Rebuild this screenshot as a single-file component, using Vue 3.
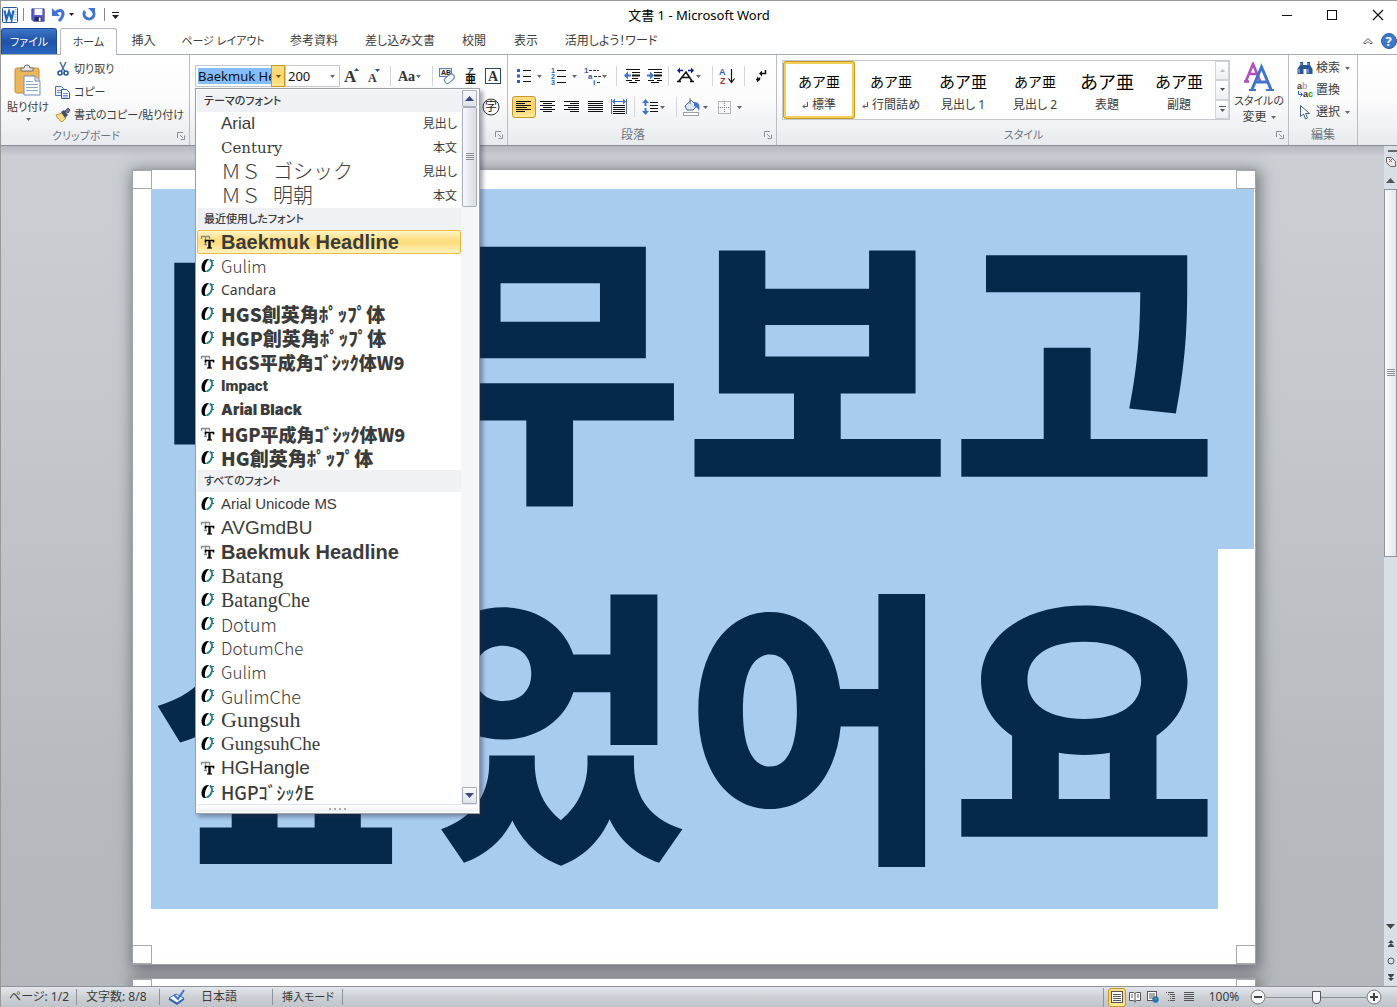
<script setup>
import { ref } from 'vue'

const fontName = ref('Baekmuk Headline')
const fontSize = ref('200')
const zoom = ref(50)

const tabs = [
  { name: '挿入', width: 53 },
  { name: 'ページ レイアウト', width: 106, kana: true },
  { name: '参考資料', width: 76 },
  { name: '差し込み文書', width: 96 },
  { name: '校閲', width: 52 },
  { name: '表示', width: 52 },
  { name: '活用しよう！ワード', width: 118 },
]

const styles = [
  { name: '標準', size: 's14', mark: true, active: true },
  { name: '行間詰め', size: 's14', mark: true },
  { name: '見出し 1', size: 's16' },
  { name: '見出し 2', size: 's14' },
  { name: '表題', size: 's18' },
  { name: '副題', size: 's16' },
]

const sections = [
  {
    title: 'テーマのフォント',
    fonts: [
      { name: 'Arial', face: 'sans17', note: '見出し' },
      { name: 'Century', face: 'century', note: '本文' },
      { name: 'ＭＳ ゴシック', face: 'wide', note: '見出し' },
      { name: 'ＭＳ 明朝', face: 'wide', note: '本文' },
    ],
  },
  {
    title: '最近使用したフォント',
    fonts: [
      { name: 'Baekmuk Headline', face: 'headline', kind: 'T', active: true },
      { name: 'Gulim', face: 'thin17', kind: 'O' },
      { name: 'Candara', face: 'candara', kind: 'O' },
      { name: 'HGS創英角ﾎﾟｯﾌﾟ体', face: 'pop', kind: 'O' },
      { name: 'HGP創英角ﾎﾟｯﾌﾟ体', face: 'pop', kind: 'O' },
      { name: 'HGS平成角ｺﾞｼｯｸ体W9', face: 'heavy', kind: 'T' },
      { name: 'Impact', face: 'impact', kind: 'O' },
      { name: 'Arial Black', face: 'black', kind: 'O' },
      { name: 'HGP平成角ｺﾞｼｯｸ体W9', face: 'heavy', kind: 'T' },
      { name: 'HG創英角ﾎﾟｯﾌﾟ体', face: 'pop', kind: 'O' },
    ],
  },
  {
    title: 'すべてのフォント',
    fonts: [
      { name: 'Arial Unicode MS', face: 'sans15', kind: 'O' },
      { name: 'AVGmdBU', face: 'sans19', kind: 'T' },
      { name: 'Baekmuk Headline', face: 'headline', kind: 'T' },
      { name: 'Batang', face: 'serif22', kind: 'O' },
      { name: 'BatangChe', face: 'serif20', kind: 'O' },
      { name: 'Dotum', face: 'thin18', kind: 'O' },
      { name: 'DotumChe', face: 'thin17', kind: 'O' },
      { name: 'Gulim', face: 'thin17', kind: 'O' },
      { name: 'GulimChe', face: 'thin18', kind: 'O' },
      { name: 'Gungsuh', face: 'serif22', kind: 'O' },
      { name: 'GungsuhChe', face: 'serif19', kind: 'O' },
      { name: 'HGHangle', face: 'sans19', kind: 'T' },
      { name: 'HGPｺﾞｼｯｸE', face: 'gothic', kind: 'O' },
    ],
  },
]

const aligns = [
  { name: '左揃え', d: 'M4 5.5h15M4 7.5h9M4 9.5h15M4 11.5h11M4 13.5h15M4 15.5h9', active: true },
  { name: '中央揃え', d: 'M4 5.5h15M7 7.5h9M4 9.5h15M7 11.5h9M4 13.5h15M7 15.5h9' },
  { name: '右揃え', d: 'M4 5.5h15M10 7.5h9M4 9.5h15M8 11.5h11M4 13.5h15M10 15.5h9' },
  { name: '両端揃え', d: 'M4 5.5h15M4 7.5h15M4 9.5h15M4 11.5h15M4 13.5h15M4 15.5h15' },
]
</script>

<template>
  <div class="window">
    <header class="titlebar">
      <div class="quick">
        <svg class="logo" width="18" height="18" viewBox="0 0 18 18">
          <rect x="1.500" y="1.500" width="15" height="15" rx="1" fill="#f4f8fd" stroke="#2b579a" />
          <path d="M13.500 3.500h2M13.500 6h2M13.500 8.500h2M13.500 11h2M13.500 13.500h2" stroke="#8eb0dd" />
          <path d="M3.500 4.500l2 9 2.500-8 2.500 8 2-9" fill="none" stroke="#1f66b8" stroke-width="2.200" />
        </svg>
        <i class="bar"></i>
        <button class="q" aria-label="上書き保存">
          <svg width="14" height="14" viewBox="0 0 16 16">
            <path d="M1 1h14v14H3l-2-2z" fill="#5c60d2" stroke="#2d318f" />
            <rect x="4" y="1" width="9" height="7" fill="#f4f6fc" />
            <rect x="4" y="10" width="8" height="5" fill="#26285e" />
            <rect x="9" y="11" width="2" height="4" fill="#fff" />
          </svg>
        </button>
        <button class="q undo" aria-label="元に戻す">
          <svg width="24" height="16" viewBox="0 0 24 16">
            <path d="M4 6c4-4 8-3 8 1 0 3-2 5-4 7" fill="none" stroke="#3f74d1" stroke-width="3" />
            <path d="M1 1v8h8z" fill="#3f74d1" />
            <path d="M18 6h5l-2.500 3z" fill="#222" />
          </svg>
        </button>
        <button class="q" aria-label="やり直し">
          <svg width="16" height="16" viewBox="0 0 16 16">
            <path d="M4 4a5 5 0 1 0 8 0" fill="none" stroke="#3f74d1" stroke-width="3" />
            <path d="M7 1h7v7z" fill="#3f74d1" />
          </svg>
        </button>
        <i class="bar"></i>
        <button class="q" aria-label="カスタマイズ">
          <svg width="8" height="10" viewBox="0 0 8 10"><path d="M0 2.500h7" stroke="#222" /><path d="M0 5h7l-3.500 4z" fill="#222" /></svg>
        </button>
      </div>
      <h1>文書 1 - Microsoft Word</h1>
      <div class="winbtns">
        <button aria-label="最小化"><svg width="20" height="20"><path d="M5 10.500h10" stroke="#111" /></svg></button>
        <button aria-label="最大化"><svg width="20" height="20"><rect x="5.500" y="5.500" width="9" height="9" fill="none" stroke="#111" /></svg></button>
        <button aria-label="閉じる"><svg width="20" height="20"><path d="M6 5l10 10M16 5L6 15" stroke="#111" stroke-width="1.200" /></svg></button>
      </div>
    </header>

    <nav class="tabs">
      <button class="file">ファイル</button>
      <button class="home">ホーム</button>
      <button v-for="t in tabs" :key="t.name" class="tab" :class="{ kana: t.kana }" :style="{ width: t.width + 'px' }">{{ t.name }}</button>
      <div class="tabright">
        <svg width="10" height="8" viewBox="0 0 10 8"><path d="M1 5.500L5 1.500l4 4v1H7L5 4.500 3 6.500H1z" fill="#fff" stroke="#555" /></svg>
        <svg width="16" height="16" viewBox="0 0 16 16">
          <circle cx="8" cy="8" r="7.500" fill="#3c78cc" stroke="#2c5fa8" />
          <text x="4.500" y="13" font-family="Noto Sans, sans-serif" font-weight="700" font-size="13" fill="#fff">?</text>
        </svg>
      </div>
    </nav>

    <div class="ribbon">
      <section class="group clip">
        <div class="gbody">
          <button class="paste">
            <svg width="30" height="32" viewBox="0 0 30 32">
              <rect x="2" y="4" width="24" height="25" rx="2" fill="#eab65c" stroke="#c48d38" />
              <path d="M8 7V4h3a3 3 0 0 1 6 0h3v3z" fill="#e8e8e8" stroke="#6c6c6c" />
              <path d="M11 12h11l5 5v14H11z" fill="#fff" stroke="#6f8db8" />
              <path d="M22 12v5h5" fill="#dbe6f5" stroke="#6f8db8" />
              <path d="M13 17.500h7M13 20.500h12M13 23.500h12M13 26.500h12" stroke="#8ba6cc" />
            </svg>
            <span>貼り付け</span>
            <svg width="5" height="3"><path d="M0 0h5L2.500 3z" fill="#666" /></svg>
          </button>
          <div class="cmds kana">
            <button>
              <svg width="16" height="16" viewBox="0 0 16 16">
                <path d="M5 1l4.500 9M11 1L6.500 10" stroke="#5a6f8f" stroke-width="1.600" />
                <circle cx="5" cy="12" r="2" fill="none" stroke="#2456a8" stroke-width="1.600" />
                <circle cx="11" cy="12" r="2" fill="none" stroke="#2456a8" stroke-width="1.600" />
              </svg>切り取り
            </button>
            <button>
              <svg width="16" height="16" viewBox="0 0 16 16">
                <path d="M.5 2.500h6l2 2v7h-8z" fill="#e6effa" stroke="#4b76b5" />
                <path d="M2 6.500h4M2 8.500h4" stroke="#6f95cf" />
                <path d="M6.500 5.500h5l3 3v6h-8z" fill="#fff" stroke="#2f5c9f" />
                <path d="M8 9.500h5M8 11.500h5M8 13h5" stroke="#6f95cf" />
              </svg>コピー
            </button>
            <button>
              <svg width="16" height="16" viewBox="0 0 16 16">
                <path d="M1 8l6-2 4 5-4 4c-2-1-5-4-6-7z" fill="#f3d98a" stroke="#b8963a" />
                <path d="M6 5l3-2 4 5-3 3z" fill="#44506a" />
                <path d="M10 4l3-3 2 2-2 3z" fill="#8a6bb0" stroke="#55487a" />
              </svg>書式のコピー/貼り付け
            </button>
          </div>
        </div>
        <footer><span>クリップボード</span><svg class="launch" width="8" height="8"><path d="M.5 6V.5H6" fill="none" stroke="#8a8f96" /><path d="M3 3l3 3M7.500 3.500v4h-4" fill="none" stroke="#8a8f96" /></svg></footer>
      </section>

      <section class="group font">
        <div class="rows">
          <div class="row">
            <div class="combo name">
              <input v-model="fontName" type="text" aria-label="フォント" />
              <button class="drop on" aria-label="フォント一覧"><svg width="5" height="3"><path d="M0 0h5L2.500 3z" fill="#6b4d10" /></svg></button>
            </div>
            <div class="combo size">
              <input v-model="fontSize" type="text" aria-label="フォント サイズ" />
              <button class="drop" aria-label="サイズ一覧"><svg width="5" height="3"><path d="M0 0h5L2.500 3z" fill="#666" /></svg></button>
            </div>
            <button class="ic w24" aria-label="拡大">
              <svg width="24" height="22"><text x="4" y="17" class="st" font-size="17">A</text><path d="M14 6l2.500-3L19 6z" fill="#2b50a0" /></svg>
            </button>
            <button class="ic w24" aria-label="縮小">
              <svg width="24" height="22"><text x="4" y="17" class="st" font-size="12">A</text><path d="M11 4h5l-2.500 3z" fill="#2b50a0" /></svg>
            </button>
            <i class="sep"></i>
            <button class="ic w38" aria-label="文字種の変換">
              <svg width="38" height="22"><text x="6" y="16" font-family="Liberation Serif, serif" font-weight="700" font-size="14" fill="#333">Aa</text><path d="M24 10h5l-2.500 3z" fill="#666" /></svg>
            </button>
            <i class="sep"></i>
            <button class="ic w24" aria-label="書式のクリア">
              <svg width="24" height="22">
                <rect x="5.500" y="3.500" width="12" height="8" fill="#e6eefa" stroke="#5b7fb4" />
                <text x="7" y="10" font-family="Liberation Sans, sans-serif" font-weight="700" font-size="7" fill="#222">AB</text>
                <rect x="10" y="11" width="11" height="6" rx="3" transform="rotate(-40 15 14)" fill="#f3f6fb" stroke="#6a7fa5" />
              </svg>
            </button>
            <button class="ic w24" aria-label="ルビ">
              <svg width="24" height="22"><text x="9" y="8" font-size="7" font-weight="700" class="jp">ア</text><text x="7" y="18" font-size="11" font-weight="700" class="jp">亜</text></svg>
            </button>
            <button class="ic w22" aria-label="囲み線">
              <svg width="22" height="22"><rect x="3.500" y="3.500" width="15" height="15" fill="#fff" stroke="#24476b" /><text x="6" y="16" class="st" font-size="14">A</text></svg>
            </button>
          </div>
          <div class="row end">
            <button class="ic w24" aria-label="囲い文字">
              <svg width="24" height="22"><circle cx="10" cy="11" r="8" fill="#fff" stroke="#333" /><text x="4" y="15" font-size="12" class="jp">字</text></svg>
            </button>
          </div>
        </div>
        <footer><span></span><svg class="launch" width="8" height="8"><path d="M.5 6V.5H6" fill="none" stroke="#8a8f96" /><path d="M3 3l3 3M7.500 3.500v4h-4" fill="none" stroke="#8a8f96" /></svg></footer>

        <div class="menu">
          <div class="mbody">
            <div class="list" role="listbox" aria-label="フォント">
              <template v-for="s in sections" :key="s.title">
                <h2>{{ s.title }}</h2>
                <div v-for="(f, i) in s.fonts" :key="i" class="item" :class="{ active: f.active }" role="option">
                  <span class="kind">
                    <svg v-if="f.kind === 'T'" width="16" height="16" viewBox="0 0 16 16">
                      <path d="M1.500 5V2.500h8V5M5.500 2v8M4 10.500h3" fill="none" stroke="#8a8a8a" stroke-width="1.300" />
                      <path d="M5.500 8.500V6.500h8v2" fill="none" stroke="#000" stroke-width="1.600" />
                      <path d="M9.500 6v8" stroke="#000" stroke-width="2.400" />
                      <path d="M7 14h5" stroke="#000" stroke-width="1.200" />
                    </svg>
                    <svg v-else-if="f.kind === 'O'" width="16" height="16" viewBox="0 0 16 16">
                      <ellipse cx="7.500" cy="7.500" rx="4" ry="6" transform="rotate(15 7 7)" fill="#fff" stroke="#b8b8b8" />
                      <path d="M9 1C4 .5 1.500 5 1.500 9.500c0 3.500 2 5 4.500 4.500-2.500-3-.5-10 3-13z" fill="#000" />
                      <path d="M10 1.500c3.500 2.500 2.500 9.500-3.500 12" fill="none" stroke="#1a8585" stroke-width="1.800" />
                      <path d="M11 2.500h3M12 7.500h2" stroke="#1a8585" />
                    </svg>
                  </span>
                  <span class="fname" :class="f.face">{{ f.name }}</span>
                  <span class="note">{{ f.note }}</span>
                </div>
              </template>
            </div>
            <div class="mscroll">
              <button aria-label="上へ"><svg width="9" height="5"><path d="M0 5h9L4.500 0z" fill="#3b4a78" /></svg></button>
              <div class="thumb"><svg width="8" height="8"><path d="M0 .5h8M0 2.500h8M0 4.500h8M0 6.500h8" stroke="#8a8f98" /></svg></div>
              <i class="fill"></i>
              <button aria-label="下へ"><svg width="9" height="5"><path d="M0 0h9L4.500 5z" fill="#3b4a78" /></svg></button>
            </div>
          </div>
          <div class="grip"><svg width="18" height="2"><path d="M0 1h2M5 1h2M10 1h2M15 1h2" stroke="#a9adb3" stroke-width="2" /></svg></div>
        </div>
      </section>

      <section class="group para">
        <div class="rows">
          <div class="row">
            <button class="ic w34" aria-label="箇条書き">
              <svg width="34" height="22"><path d="M5 5.500h3M5 11h3M5 16.500h3" stroke="#2f5fb5" stroke-width="3" /><path d="M11 5.500h8M11 11.500h8M11 16.500h8" stroke="#111" /><path d="M25 10h5l-2.500 3z" fill="#666" /></svg>
            </button>
            <button class="ic w34" aria-label="段落番号">
              <svg width="34" height="22"><g font-family="Liberation Sans, sans-serif" font-weight="700" font-size="7" fill="#2f5fb5"><text x="5" y="8">1</text><text x="5" y="14">2</text><text x="5" y="20">3</text></g><path d="M11 5.500h9M11 11.500h9M11 17.500h9" stroke="#111" /><path d="M26 10h5l-2.500 3z" fill="#666" /></svg>
            </button>
            <button class="ic w34" aria-label="アウトライン">
              <svg width="34" height="22"><g font-family="Liberation Sans, sans-serif" font-weight="700" font-size="8" fill="#2f5fb5"><text x="4" y="8">1</text><text x="8" y="14">a</text><text x="13" y="20">i</text></g><path d="M9 5.500h10M14 11.500h7M17 17.500h4" stroke="#333" stroke-dasharray="3 1" /><path d="M22 10h5l-2.500 3z" fill="#666" /></svg>
            </button>
            <i class="sep"></i>
            <button class="ic w24" aria-label="インデントを減らす">
              <svg width="24" height="22"><path d="M8 4.500h14M14 7.500h8M14 13.500h6M8 15.500h6M17 15.500h5M11 17.500h8" stroke="#111" /><path d="M14 10.500h8" stroke="#111" stroke-width="2" /><path d="M6 10.500l4-4v3h3v2h-3v3z" fill="#3f74c9" /></svg>
            </button>
            <button class="ic w24" aria-label="インデントを増やす">
              <svg width="24" height="22"><path d="M6 4.500h14M12 7.500h8M12 13.500h6M6 15.500h6M15 15.500h5M9 17.500h8" stroke="#111" /><path d="M12 10.500h8" stroke="#111" stroke-width="2" /><path d="M12 10.500l-4-4v3H5v2h3v3z" fill="#3f74c9" /></svg>
            </button>
            <i class="sep"></i>
            <button class="ic w40" aria-label="拡張書式">
              <svg width="40" height="22"><path d="M7 16.500h4M20 16.500h4M9 16l7-9 6 9M12 12.500h8" stroke="#111" stroke-width="1.600" fill="none" /><path d="M9 5.500h4M18 5.500h4" stroke="#0d1a8a" stroke-width="1.500" /><path d="M7 5.500l3-3v6zM24 5.500l-3-3v6z" fill="#0d1a8a" /><path d="M26 10h5l-2.500 3z" fill="#666" /></svg>
            </button>
            <i class="sep"></i>
            <button class="ic w28" aria-label="並べ替え">
              <svg width="28" height="22"><g font-family="Liberation Sans, sans-serif" font-weight="700" font-size="9"><text x="5" y="10" fill="#2f5fb5">A</text><text x="6" y="19" fill="#a33b3b">Z</text></g><path d="M17.500 4v13M14.500 13.500l3 4 3-4" fill="none" stroke="#111" stroke-width="1.200" /></svg>
            </button>
            <i class="sep"></i>
            <button class="ic w28" aria-label="編集記号">
              <svg width="28" height="22"><path d="M19.500 5v3.500h-4M10 14.500h4M13.500 14.500v-2" fill="none" stroke="#111" stroke-width="1.500" /><path d="M13 8.500l3-3v6zM14 14.500l-3-3v6z" fill="#111" /></svg>
            </button>
          </div>
          <div class="row">
            <button v-for="a in aligns" :key="a.name" class="ic w24" :class="{ sel: a.active }" :aria-label="a.name">
              <svg width="24" height="22"><path :d="a.d" stroke="#111" /></svg>
            </button>
            <button class="ic w24" aria-label="均等割り付け">
              <svg width="24" height="22"><path d="M3.500 3v15M18.500 3v15" stroke="#5a6b88" /><path d="M5 9.500h12M5 11.500h12M5 13.500h12M5 15.500h12M5 17.500h12" stroke="#111" /><path d="M6 5.500h10" stroke="#3f74c9" /><path d="M4 5.500l3-3v6zM18 5.500l-3-3v6z" fill="#3f74c9" /></svg>
            </button>
            <i class="sep"></i>
            <button class="ic w38" aria-label="行間">
              <svg width="38" height="22"><path d="M9.500 5v12" stroke="#3f74c9" stroke-dasharray="5 2" stroke-width="2" /><path d="M6 7l3.500-4L13 7zM6 15l3.500 4 3.500-4z" fill="#3f74c9" /><path d="M14 6.500h8M14 9.500h8M14 12.500h8M14 15.500h8" stroke="#111" /><path d="M24 10h5l-2.500 3z" fill="#666" /></svg>
            </button>
            <i class="sep"></i>
            <button class="ic w34" aria-label="塗りつぶし">
              <svg width="34" height="22"><rect x="5.500" y="16.500" width="15" height="3" fill="#fff" stroke="#9aa0a8" /><path d="M7 10l6-6 6 6-4 4H9z" fill="#dfe7f3" stroke="#51698f" /><path d="M12 2v6" stroke="#51698f" /><path d="M16 6c6 0 6 5 5 9-1-3-3-4-5-5z" fill="#3f74c9" /><path d="M25 10h5l-2.500 3z" fill="#666" /></svg>
            </button>
            <button class="ic w34" aria-label="罫線">
              <svg width="34" height="22"><rect x="6.500" y="5.500" width="12" height="12" fill="none" stroke="#777" stroke-dasharray="1 1" /><path d="M12.500 5v12M6 11.500h12" stroke="#777" stroke-dasharray="1 1" /><path d="M25 10h5l-2.500 3z" fill="#666" /></svg>
            </button>
          </div>
        </div>
        <footer><span class="kanji">段落</span><svg class="launch" width="8" height="8"><path d="M.5 6V.5H6" fill="none" stroke="#8a8f96" /><path d="M3 3l3 3M7.500 3.500v4h-4" fill="none" stroke="#8a8f96" /></svg></footer>
      </section>

      <section class="group stylesg">
        <div class="gbody">
          <div class="gallery">
            <button v-for="s in styles" :key="s.name" class="style" :class="{ on: s.active }">
              <span class="sample" :class="s.size">あア亜</span>
              <span class="sname"><svg v-if="s.mark" width="6" height="7"><path d="M5.500 0v4.500H1M3 2.500l-2 2 2 2" fill="none" stroke="#555" /></svg>{{ s.name }}</span>
            </button>
            <div class="gscroll">
              <button aria-label="前の行"><svg width="5" height="3"><path d="M0 3h5L2.500 0z" fill="#bbb" /></svg></button>
              <button aria-label="次の行"><svg width="5" height="3"><path d="M0 0h5L2.500 3z" fill="#555" /></svg></button>
              <button aria-label="その他"><svg width="7" height="6"><path d="M0 .5h7" stroke="#555" /><path d="M1 3h5L3.500 6z" fill="#555" /></svg></button>
            </div>
          </div>
          <button class="change">
            <svg width="32" height="30" viewBox="0 0 32 30">
              <path d="M3 19l7-17 7 17M6 12h9M1 19.500h5" fill="none" stroke="#b04fbb" stroke-width="2.600" />
              <path d="M9 27.500L18.500 5 28 27.500M12.500 20h12" fill="none" stroke="#3f74c9" stroke-width="3" />
              <path d="M6 28h7M23 28h8" stroke="#3f74c9" stroke-width="2" />
            </svg>
            <span>スタイルの</span>
            <span class="kanji">変更 <svg width="5" height="3"><path d="M0 0h5L2.500 3z" fill="#666" /></svg></span>
          </button>
        </div>
        <footer><span>スタイル</span><svg class="launch" width="8" height="8"><path d="M.5 6V.5H6" fill="none" stroke="#8a8f96" /><path d="M3 3l3 3M7.500 3.500v4h-4" fill="none" stroke="#8a8f96" /></svg></footer>
      </section>

      <section class="group edit">
        <div class="cmds">
          <button>
            <svg width="16" height="16" viewBox="0 0 16 16"><path d="M3 2h3v3h4V2h3v3l2.500 4v5H9.500V9h-3v5H.5V9L3 5z" fill="#2c5596" /><path d="M2 9v4M11 9v4M4 3v2M11 3v2" stroke="#b5cbea" /></svg>
            検索<svg class="ar" width="5" height="3"><path d="M0 0h5L2.500 3z" fill="#666" /></svg>
          </button>
          <button>
            <svg width="16" height="16" viewBox="0 0 16 16" font-family="Liberation Sans, sans-serif" font-weight="700"><text x="0" y="7" font-size="9" fill="#444">a<tspan fill="#aaa">b</tspan></text><text x="6" y="15" font-size="9" fill="#333">a<tspan fill="#159a15">c</tspan></text><path d="M1.500 9v3.500H5M3.500 10.500l2 2-2 2" fill="none" stroke="#2f5fb5" /></svg>
            置換
          </button>
          <button>
            <svg width="16" height="16" viewBox="0 0 16 16"><path d="M3.500 1.500v11l3-2.500 2 5 2-1-2-4.500h4z" fill="#fff" stroke="#4a6186" /></svg>
            選択<svg class="ar" width="5" height="3"><path d="M0 0h5L2.500 3z" fill="#666" /></svg>
          </button>
        </div>
        <footer><span class="kanji">編集</span></footer>
      </section>
    </div>

    <main class="work">
      <div class="canvas">
        <article class="page">
          <div class="corners"><i></i><i></i></div>
          <div class="text">
            <p class="line first">너무보고</p>
            <p class="line">싶었어요</p>
          </div>
          <div class="corners"><i></i><i></i></div>
        </article>
        <article class="page next"><div class="corners"><i></i><i></i></div></article>
      </div>
      <aside class="vscroll">
        <svg width="13" height="26"><path d="M4 5h9" stroke="#666" stroke-width="2" /><path d="M2.500 11.500h5l4 4v5h-5l-4-4z" fill="#f0e6ea" stroke="#666" /><path d="M5 13l3 3M8 13l-3 3" stroke="#666" /></svg>
        <button aria-label="上へ"><svg width="9" height="5"><path d="M0 5h9L4.500 0z" fill="#555" /></svg></button>
        <div class="vthumb"><svg width="8" height="8"><path d="M0 .5h8M0 2.500h8M0 4.500h8M0 6.500h8" stroke="#8a8f98" /></svg></div>
        <i class="fill"></i>
        <button aria-label="下へ"><svg width="9" height="5"><path d="M0 0h9L4.500 5z" fill="#444" /></svg></button>
        <button aria-label="前のページ"><svg width="6" height="7"><path d="M0 3h6L3 0zM0 6h6L3 3z" fill="#444" /><path d="M0 6.500h6" stroke="#444" /></svg></button>
        <button aria-label="対象の選択"><svg width="8" height="8"><circle cx="4" cy="4" r="3" fill="none" stroke="#555" /></svg></button>
        <button aria-label="次のページ"><svg width="6" height="7"><path d="M0 1h6L3 4zM0 4h6L3 7z" fill="#444" /><path d="M0 .5h6" stroke="#444" /></svg></button>
      </aside>
    </main>

    <footer class="status">
      <span class="cell c1">ページ: 1/2</span>
      <span class="cell c2">文字数: 8/8</span>
      <span class="cell c3">
        <svg width="18" height="16" viewBox="0 0 18 16"><path d="M1 9l7-4 8 4-7 5z" fill="#f2f5fa" stroke="#4570b5" /><path d="M1 10l8 5 7-5" fill="none" stroke="#2f5fb5" stroke-width="1.500" /><path d="M6 6l4 4 6-9" fill="none" stroke="#3f74c9" stroke-width="2" /></svg>
        日本語
      </span>
      <span class="cell c4 kana">挿入モード</span>
      <span class="fill"></span>
      <div class="views">
        <button class="sel" aria-label="印刷レイアウト"><svg width="12" height="12"><rect x=".5" y=".5" width="11" height="11" fill="#fff" stroke="#555" /><path d="M2 3.500h8M2 5.500h8M2 7.500h8M2 9.500h8" stroke="#555" /></svg></button>
        <button aria-label="全画面閲覧"><svg width="12" height="12"><path d="M.5 1.500h4l1.500 1 1.500-1h4v8h-4l-1.500 1-1.500-1h-4zM6 2.500v9" fill="#fff" stroke="#555" /><path d="M2 4h2M2 6h2M8 4h2M8 6h2" stroke="#555" /></svg></button>
        <button aria-label="Web レイアウト"><svg width="12" height="12"><rect x=".5" y=".5" width="9" height="9" fill="#fff" stroke="#555" /><path d="M2 3h6M2 5h6M2 7h4" stroke="#555" /><circle cx="8.500" cy="8.500" r="3.200" fill="#2a6fb8" /><path d="M7 8l2-2 1 3z" fill="#3ba55a" /></svg></button>
        <button aria-label="アウトライン"><svg width="12" height="12"><path d="M1 1.500h1M3 1.500h6M3 3.500h1M5 3.500h5M5 5.500h1M7 5.500h3M5 7.500h1M7 7.500h3M3 9.500h1M5 9.500h5" stroke="#555" /></svg></button>
        <button aria-label="下書き"><svg width="12" height="12"><path d="M1 1.500h10M1 3.500h10M1 5.500h10M1 7.500h10M1 9.500h10" stroke="#555" /></svg></button>
      </div>
      <button class="pct">100%</button>
      <button class="round" aria-label="縮小"><svg width="16" height="16"><circle cx="8" cy="8" r="7" fill="#f4f5f7" stroke="#777" /><path d="M4 8h8" stroke="#444" stroke-width="2" /></svg></button>
      <input v-model="zoom" class="slider" type="range" min="0" max="100" aria-label="ズーム" />
      <button class="round" aria-label="拡大"><svg width="16" height="16"><circle cx="8" cy="8" r="7" fill="#f4f5f7" stroke="#777" /><path d="M4 8h8M8 4v8" stroke="#444" stroke-width="2" /></svg></button>
    </footer>
  </div>
</template>

<style>
body {
  overflow: hidden;
}
</style>

<style scoped>
* {
  box-sizing: border-box;
}
.window {
  height: 100vh;
  display: flex;
  flex-direction: column;
  background: #fff;
  border-top: 1px solid #999;
  border-left: 1px solid #999;
  font: 12px/16px "Noto Sans", "Noto Sans CJK JP", sans-serif;
  font-feature-settings: "palt";
  color: #3b3b3b;
  white-space: nowrap;
}
svg {
  display: block;
  flex: none;
}
button {
  font: inherit;
  font-feature-settings: inherit;
  color: inherit;
  background: none;
  border: 0;
  padding: 0;
  display: flex;
  align-items: center;
  justify-content: center;
}
.kana {
  font-size: 11px;
}
.fill {
  flex: 1;
}
.st {
  font-family: "Liberation Serif", serif;
  font-weight: 700;
  fill: #333;
}
.jp {
  font-family: "Noto Sans CJK JP", sans-serif;
  fill: #111;
}

.titlebar {
  display: grid;
  grid-template-columns: 1fr auto 1fr;
  align-items: center;
  height: 27px;
}
.quick {
  display: flex;
  align-items: center;
}
.bar {
  width: 1px;
  height: 13px;
  background: #888;
  margin: 0 4px;
}
.q {
  margin: 0 3px;
}
.titlebar h1 {
  margin: 0;
  font-size: 13px;
  font-weight: 400;
  color: #000;
}
.winbtns {
  display: flex;
  justify-content: flex-end;
  gap: 25px;
  padding-right: 10px;
}

.tabs {
  display: flex;
  align-items: stretch;
  height: 27px;
  border-bottom: 1px solid #a3a9b1;
}
.file {
  width: 56px;
  margin-right: 3px;
  font-size: 11px;
  color: #fff;
  border: 1px solid #1b4a96;
  border-bottom: 0;
  border-radius: 3px 3px 0 0;
  background: linear-gradient(#3c77c8, #1f52a6 50%, #2a67c0);
}
.home {
  width: 57px;
  margin-bottom: -1px;
  font-size: 11px;
  border: 1px solid #b3b7bd;
  border-bottom: 0;
  border-radius: 3px 3px 0 0;
  background: #fff;
}
.tabright {
  flex: 1;
  display: flex;
  justify-content: flex-end;
  align-items: center;
  gap: 8px;
}

.ribbon {
  display: flex;
  height: 91px;
  background: linear-gradient(#fff, #fbfbfc 50%, #e7eaee);
  border-bottom: 1px solid #8a8f96;
  position: relative;
  z-index: 2;
}
.group {
  display: flex;
  flex-direction: column;
  border-right: 1px solid #b9bec5;
  flex: none;
}
.group footer {
  margin-top: auto;
  height: 21px;
  display: flex;
  align-items: center;
  font-size: 11px;
  color: #6c7580;
}
.group footer span {
  flex: 1;
  text-align: center;
}
.group .kanji {
  font-size: 12px;
}
.launch {
  margin: 0 4px 0 6px;
}
.gbody {
  display: flex;
}
.clip {
  width: 189px;
}
.font {
  width: 318px;
  position: relative;
}
.para {
  width: 269px;
}
.stylesg {
  width: 512px;
}
.edit {
  width: 69px;
}
.paste {
  flex-direction: column;
  width: 54px;
  padding-top: 3px;
  font-size: 11px;
}
.paste span {
  line-height: 22px;
}
.cmds {
  display: flex;
  flex-direction: column;
  align-items: flex-start;
  padding-top: 2px;
}
.cmds button {
  height: 23px;
  gap: 3px;
}
.edit .cmds {
  padding: 2px 0 0 8px;
}
.edit .cmds button {
  height: 22px;
}
.ar {
  margin-left: 2px;
}

.rows {
  display: flex;
  flex-direction: column;
  gap: 9px;
  padding: 10px 2px 0 4px;
}
.row {
  display: flex;
  align-items: center;
  height: 22px;
}
.end {
  justify-content: flex-end;
}
.font .rows {
  padding-left: 5px;
}
.ic {
  height: 22px;
  flex: none;
}
.w22 { width: 22px; }
.w24 { width: 24px; }
.w28 { width: 28px; }
.w34 { width: 34px; }
.w38 { width: 38px; }
.w40 { width: 40px; }
.sel {
  border: 1px solid #c29b29;
  border-radius: 3px;
  background: linear-gradient(#fddf87, #fdcf5f 50%, #ffec9c);
}
.sep {
  width: 4px;
  height: 20px;
  background: linear-gradient(#d3d6da, #d3d6da) center / 1px 100% no-repeat;
}
.combo {
  display: flex;
  height: 22px;
  border: 1px solid #c5c8cd;
  background: #fff;
}
.combo input {
  flex: 1;
  min-width: 0;
  border: 0;
  padding: 0 2px;
  font: 13px/16px "Noto Sans", sans-serif;
  color: #111;
  background: none;
}
.name {
  width: 91px;
}
.name input {
  margin: 2px 0 2px 2px;
  padding: 0;
  background: #84bdf8;
}
.size {
  width: 54px;
  border-left: 0;
}
.drop {
  width: 14px;
}
.drop.on {
  margin: -1px 0;
  border: 1px solid #c29b29;
  background: linear-gradient(#fddf87, #fdd469 50%, #ffe791);
}

.menu {
  position: absolute;
  left: 5px;
  top: 33px;
  width: 285px;
  padding: 1px;
  background: #fff;
  border: 1px solid #9a9fa6;
  box-shadow: 3px 3px 4px rgba(40, 40, 60, 0.4);
}
.mbody {
  display: flex;
}
.list {
  flex: 1;
}
.list h2 {
  margin: 0;
  height: 22px;
  padding-left: 7px;
  font-size: 11px;
  line-height: 21px;
  font-weight: 500;
  background: #eff1f5;
}
.item {
  display: flex;
  align-items: center;
  height: 24px;
  border: 1px solid transparent;
  border-radius: 2px;
}
.item.active {
  border-color: #e9bd45;
  background: linear-gradient(#fff3c8, #fcdf83 40%, #fcdf83 60%, #fff2c4);
}
.kind {
  width: 23px;
  padding-left: 2px;
  flex: none;
}
.fname {
  flex: 1;
  line-height: 22px;
  font-feature-settings: normal;
}
.note {
  padding-right: 3px;
}
.sans15 { font-family: "Liberation Sans", sans-serif; font-size: 15px; }
.sans17 { font-family: "Liberation Sans", sans-serif; font-size: 17px; }
.sans19 { font-family: "Liberation Sans", sans-serif; font-size: 19px; }
.century { font-family: "DejaVu Serif", serif; font-size: 15px; }
.wide { font-family: "Liberation Mono", "Noto Sans CJK JP", monospace; font-size: 20px; font-weight: 300; padding-top: 4px; }
.headline { font-family: "Liberation Sans", sans-serif; font-size: 20px; font-weight: 700; }
.thin17 { font-family: "Noto Sans CJK KR", sans-serif; font-size: 17px; font-weight: 300; }
.thin18 { font-family: "Noto Sans CJK KR", sans-serif; font-size: 18px; font-weight: 300; }
.candara { font-family: "Noto Sans", sans-serif; font-size: 14px; }
.pop { font-family: "Noto Sans CJK JP", sans-serif; font-size: 19px; font-weight: 900; }
.heavy { font-family: "Noto Sans CJK JP", sans-serif; font-size: 18px; font-weight: 900; }
.impact { font-family: Roboto, sans-serif; font-size: 15px; font-weight: 900; }
.black { font-family: Inter, sans-serif; font-size: 15px; font-weight: 900; }
.serif19 { font-family: "Liberation Serif", serif; font-size: 19px; }
.serif20 { font-family: "Liberation Serif", serif; font-size: 20px; }
.serif22 { font-family: "Liberation Serif", serif; font-size: 22px; }
.gothic { font-family: "Noto Sans CJK JP", sans-serif; font-size: 18px; font-weight: 500; }
.mscroll {
  width: 17px;
  display: flex;
  flex-direction: column;
  padding: 0 1px;
  background: #f5f6f8;
}
.mscroll button {
  height: 17px;
  border: 1px solid #a9adb5;
  border-radius: 1px;
  background: linear-gradient(#f8f9fb, #dfe3ea);
}
.thumb {
  height: 100px;
  display: flex;
  align-items: center;
  justify-content: center;
  border: 1px solid #a9adb5;
  border-radius: 2px;
  background: linear-gradient(90deg, #f8f9fb, #d9dce2);
}
.grip {
  height: 8px;
  display: flex;
  align-items: center;
  justify-content: center;
  border-top: 1px solid #dfe6ee;
  background: linear-gradient(#fff, #eceff2);
}

.gallery {
  display: flex;
  height: 60px;
  margin: 5px 0 0 5px;
  border: 1px solid #c5c8cd;
  background: #fff;
}
.style {
  width: 72px;
  flex-direction: column;
  padding-top: 4px;
  border: 3px solid transparent;
}
.style.on {
  border-color: #f6cf56;
  border-radius: 3px;
  outline: 1px solid #c29b29;
  outline-offset: -1px;
}
.sample {
  height: 26px;
  line-height: 26px;
  font-family: "Noto Sans CJK JP", sans-serif;
  font-feature-settings: normal;
  color: #000;
}
.s14 { font-size: 14px; }
.s16 { font-size: 16px; }
.s18 { font-size: 18px; }
.sname {
  display: flex;
  align-items: center;
  gap: 4px;
  line-height: 22px;
}
.gscroll {
  width: 14px;
  display: flex;
  flex-direction: column;
}
.gscroll button {
  flex: 1;
  border: 1px solid #d0d3d8;
  background: linear-gradient(#fff, #eceef1);
}
.change {
  flex: 1;
  flex-direction: column;
  justify-content: flex-start;
  gap: 2px;
  padding-top: 7px;
  font-size: 11px;
}
.change span {
  display: flex;
  align-items: center;
  gap: 4px;
  line-height: 14px;
}

.work {
  flex: 1;
  min-height: 0;
  display: flex;
  background: linear-gradient(#b4b8be, #cbcfd4 10px, #c6cace 25%, #b6babe 80%, #b4b8bc);
}
.canvas {
  flex: 1;
  overflow: hidden;
  padding: 23px 0 0 2px;
}
.page {
  width: 1124px;
  height: 796px;
  margin: 0 auto 13px;
  display: flex;
  flex-direction: column;
  justify-content: space-between;
  background: #fff;
  border: 1px solid #9ea3a9;
  box-shadow: 2px 3px 14px 2px rgba(60, 64, 70, 0.6);
}
.corners {
  display: flex;
  justify-content: space-between;
}
.corners i {
  width: 19px;
  height: 19px;
  border: 1px solid #a8a8a8;
}
.corners i:first-child {
  border-left: 0;
}
.corners i:last-child {
  border-right: 0;
}
.text {
  flex: 1;
  display: flex;
  flex-direction: column;
  align-items: flex-start;
  padding-left: 18px;
}
.line {
  margin: 0;
  height: 360px;
  background: #a8ccf0;
  color: #06294b;
  font: 900 290px/328px "Noto Sans CJK KR", sans-serif;
}
.first {
  padding-right: 36px;
}
.vscroll {
  width: 13px;
  display: flex;
  flex-direction: column;
  background: #d9dfe6;
}
.vscroll button {
  height: 17px;
}
.vthumb {
  height: 368px;
  display: flex;
  align-items: center;
  justify-content: center;
  border: 1px solid #8f959d;
  background: linear-gradient(90deg, #fbfcfd, #e3e6ea);
}

.status {
  display: flex;
  align-items: center;
  height: 21px;
  padding-right: 15px;
  border-top: 1px solid #8f949a;
  background: linear-gradient(#e3e6ea, #cdd1d6 50%, #bfc4ca);
}
.cell {
  display: flex;
  align-items: center;
  height: 16px;
  padding-left: 9px;
  border-right: 1px solid #8f949a;
}
.c1 { width: 76px; padding-left: 8px; }
.c2 { width: 83px; }
.c3 { width: 113px; gap: 15px; padding-left: 8px; }
.c4 { width: 70px; }
.views {
  display: flex;
  padding-left: 4px;
  border-left: 1px solid #8f949a;
}
.views button {
  width: 18px;
  height: 19px;
}
.pct {
  width: 52px;
}
.round {
  width: 16px;
}
.slider {
  appearance: none;
  width: 100px;
  height: 16px;
  margin: 0;
  background: linear-gradient(#8b9097, #8b9097) center / 100% 1px no-repeat;
}
.slider::-webkit-slider-thumb {
  appearance: none;
  width: 9px;
  height: 13px;
  border: 1px solid #555;
  border-radius: 1px 1px 5px 5px;
  background: #f6f7f9;
}
</style>
